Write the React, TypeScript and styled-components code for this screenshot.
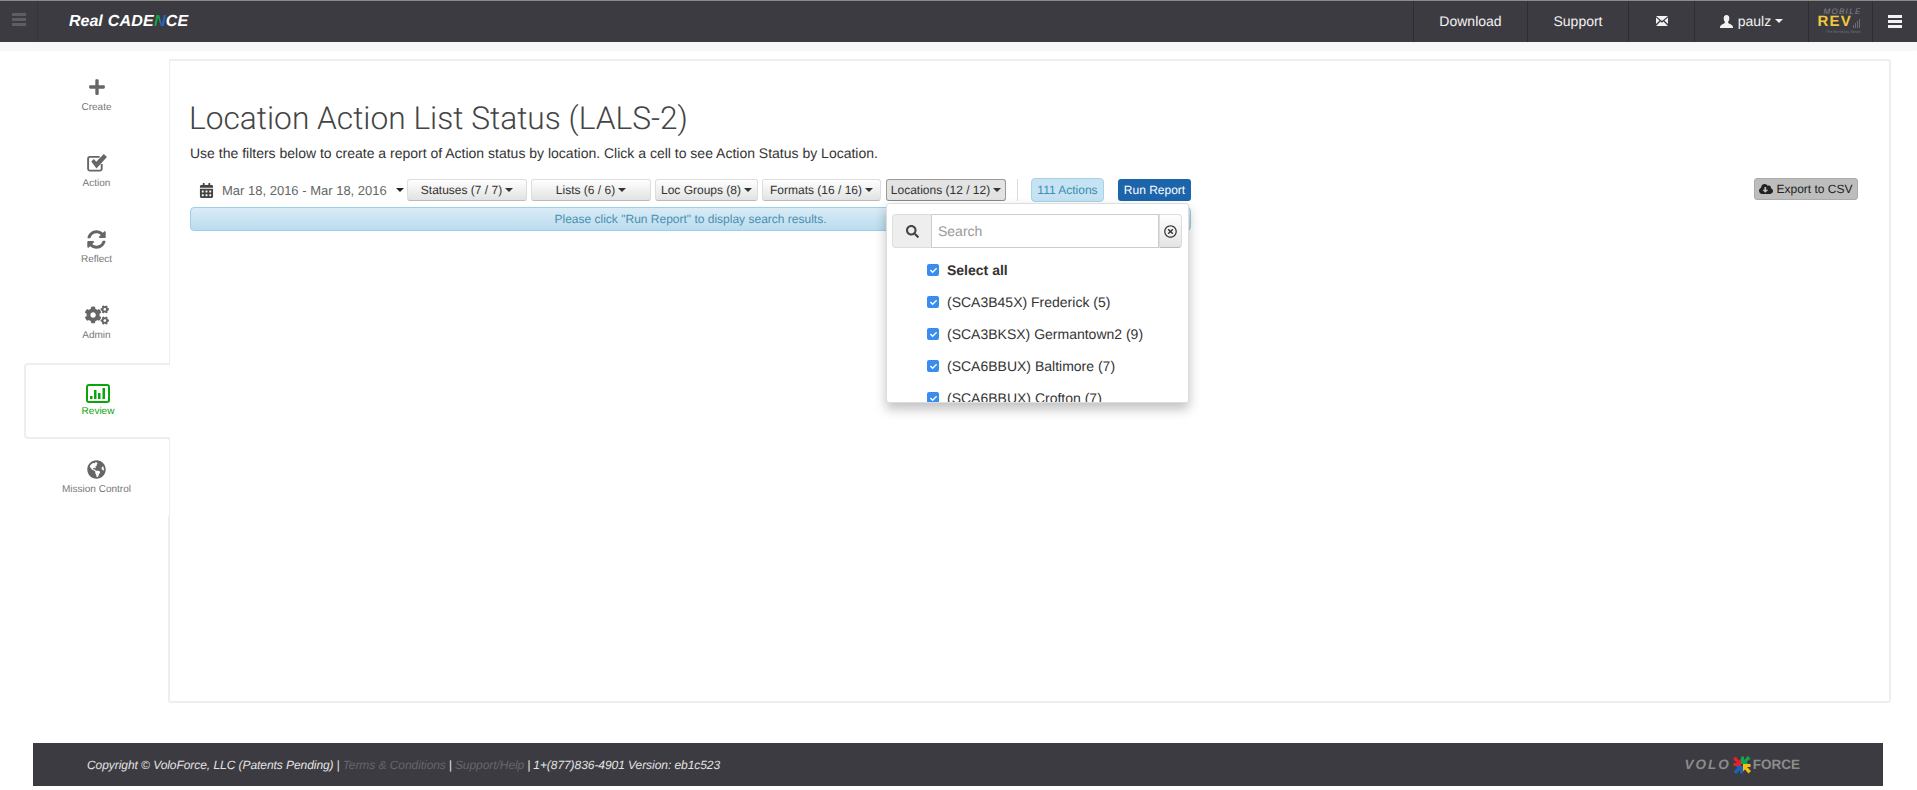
import React from "react";
import styled, { createGlobalStyle } from "styled-components";
import {
  FaCalendarAlt, FaCheck, FaCloudDownloadAlt, FaCogs, FaGlobeAmericas, FaPlus, FaSearch, FaSyncAlt, FaRegTimesCircle,
} from "react-icons/fa";

const Global = createGlobalStyle`
  html, body { margin: 0; padding: 0; background: #fff; }
  body { font-family: "Liberation Sans", Arial, sans-serif; color: #333; overflow: hidden; text-rendering: geometricPrecision; }
  * { box-sizing: border-box; }
`;

const Page = styled.div`width: 1917px; height: 790px; overflow: hidden; display: flex; flex-direction: column;`;
const NavBar = styled.header`
  height: 42px; flex: none; display: flex; align-items: stretch; background: #3c3b41;
  border-top: 1px solid #8a8a8a; color: #f2f2f2; font-size: 14px;
`;
const MenuToggle = styled.div`
  width: 38px; display: flex; align-items: center; justify-content: center;
  border-right: 1px solid #35343a; padding-bottom: 5px;
`;
const Burger = styled.span<{ $color: string }>`
  display: block; width: 14px; height: 13px;
  border-top: 3px solid ${p => p.$color}; border-bottom: 3px solid ${p => p.$color}; position: relative;
  &::after { content: ""; position: absolute; left: 0; right: 0; top: 2px; height: 3px; background: ${p => p.$color}; }
`;
const Brand = styled.div`
  margin-left: 31px; align-self: center; font-size: 16px; font-weight: 700; font-style: italic; color: #fff;
  white-space: nowrap; padding-bottom: 0;
`;
const BrandCaps = styled.span`margin-left: 5px; letter-spacing: .2px;`;
const SplitN = styled.span`
  background: linear-gradient(90deg, #17a34a 0 50%, #2467c0 50% 100%);
  -webkit-background-clip: text; background-clip: text; color: transparent;
`;
const Spacer = styled.div`flex: 1;`;
const NavItem = styled.div<{ $w: number }>`
  width: ${p => p.$w}px; display: flex; align-items: center; justify-content: center; gap: 5px;
  border-left: 1px solid #2e2d33; padding-bottom: 1px;
`;
const Caret = styled.span<{ $c?: string; $ml?: number }>`
  display: inline-block; width: 0; height: 0; margin-left: ${p => p.$ml ?? 3}px;
  border-top: 4px solid ${p => p.$c || "currentColor"}; border-left: 4px solid transparent; border-right: 4px solid transparent;
`;
const RevLogo = styled.div`display: flex; flex-direction: column; align-items: flex-start; line-height: 1; padding-bottom: 2px; width: 46px;`;
const RevTop = styled.span`font-size: 8px; color: #85848a; letter-spacing: 1.300px; font-style: italic; line-height: 9px; margin-left: 6px;`;
const RevMain = styled.span`font-size: 15px; font-weight: 700; color: #f2c83c; letter-spacing: 1.200px; display: flex; align-items: flex-end; gap: 0; line-height: 12px;`;
const RevNote = styled.span`font-size: 4px; color: #706f74; line-height: 5px; margin: 1px 0 0 8px; white-space: nowrap;`;
const SubStrip = styled.div`height: 8px; flex: none; background: #f7f7f7; box-shadow: 0 1px 2px rgba(0,0,0,.04);`;

const Body = styled.div`display: flex; margin: 9px 26px 0 24px; height: 644px; flex: none;`;
const Side = styled.nav`width: 145px; flex: none; position: relative; z-index: 1; margin-right: -1px;`;
const SideItem = styled.div<{ $active?: boolean; $pad?: number }>`
  height: 76px; display: flex; flex-direction: column; align-items: center; padding-top: ${p => p.$pad ?? 16}px;
  padding-right: ${p => (p.$active ? 0 : 2)}px;
  margin-bottom: ${p => (p.$active ? 1 : 0)}px;
  font-size: 10px; color: ${p => (p.$active ? "#0aa50a" : "#777")}; background: #fff;
  border: 2px solid ${p => (p.$active ? "#eee" : "transparent")}; border-right: 0; border-radius: 4px 0 0 4px;
  width: ${p => (p.$active ? "146px" : "145px")};
  svg { color: ${p => (p.$active ? "#0aa50a" : "#666")}; display: block; }
`;
const IconBox = styled.div`height: 20px; display: flex; align-items: center; justify-content: center;`;
const SideLabel = styled.span<{ $near?: boolean }>`margin-top: ${p => (p.$near ? 3 : 5)}px; line-height: 12px;`;

const Main = styled.main`
  flex: 1; border: 2px solid #eee; border-radius: 3px; padding: 39px 19px 0 20px; position: relative;
`;
const Title = styled.h1`
  margin: 0 0 0 -1px; font-family: Roboto, "Liberation Sans", sans-serif; font-weight: 300; font-size: 31.700px; line-height: 38px; color: #444;
`;
const Lead = styled.p`margin: 5px 0 0; font-size: 14px; line-height: 20px; color: #333;`;
const Toolbar = styled.div`display: flex; align-items: center; height: 24px; margin-top: 15px; font-size: 12px; position: relative;`;
const DateRange = styled.div`
  width: 217px; display: flex; align-items: center; padding-left: 9px; color: #666; font-size: 13px; white-space: nowrap;
  svg { color: #444; margin-right: 8px; }
`;
const Button = styled.div<{ $w: number; $gap?: number; $open?: boolean }>`
  width: ${p => p.$w}px; height: 22px; margin-right: ${p => p.$gap ?? 4}px; display: flex; align-items: center; justify-content: center;
  color: #333; border-radius: 3px; white-space: nowrap;
  background: ${p => (p.$open ? "#e3e3e3" : "linear-gradient(#fff, #e2e2e2)")};
  border: 1px solid ${p => (p.$open ? "#9a9a9a" : "#ddd")}; border-bottom-color: ${p => (p.$open ? "#888" : "#bbb")};
`;
const Divider = styled.span`width: 1px; height: 22px; background: #ddd; margin: 0 13px 0 11px;`;
const ActionsTag = styled.div`
  width: 73px; height: 24px; display: flex; align-items: center; justify-content: center; color: #3f8db0;
  background: #c5e3f3; border: 1px solid #a5d3ea; border-radius: 4px; margin-right: 14px;
`;
const RunBtn = styled.div`
  width: 73px; height: 22px; display: flex; align-items: center; justify-content: center; color: #fff;
  background: #1c65ab; border-radius: 3px;
`;
const ExportBtn = styled.div`
  margin-left: auto; margin-right: 12px; margin-top: -2px; width: 104px; height: 22px; display: flex; align-items: center; justify-content: center; gap: 3px;
  color: #222; background: #bdbdbd; border: 1px solid #aaa; border-radius: 3px; font-size: 12px;
`;
const Alert = styled.div`
  width: 1001px; height: 24px; margin-top: 5px; display: flex; align-items: center; justify-content: center;
  font-size: 12px; color: #4a8fb0; background: linear-gradient(#d9ecf6, #b9dcee); border: 1px solid #9ccfe8; border-radius: 4px;
`;
const Dropdown = styled.div`
  position: absolute; left: 716px; top: 142px; width: 303px; height: 200px; overflow: hidden; background: #fff;
  border: 1px solid #ddd; border-radius: 3px; box-shadow: 0 6px 12px rgba(0,0,0,.25); z-index: 5;
`;
const SearchGroup = styled.div`display: flex; height: 34px; margin: 10px 6px 6px 5px;`;
const SearchAddon = styled.div`
  width: 40px; display: flex; align-items: center; justify-content: center; background: #eee; color: #444;
  border: 1px solid #ddd; border-right: 1px solid #ccc; border-radius: 4px 0 0 4px;
`;
const SearchInput = styled.div`
  flex: 1; display: flex; align-items: center; padding-left: 6px; font-size: 14px; color: #999;
  border: 1px solid #ccc; border-left: 0; border-radius: 0;
`;
const ClearBtn = styled.div`
  width: 23px; display: flex; align-items: center; justify-content: center; color: #333; background: linear-gradient(#fff, #e4e4e4);
  border: 1px solid #ddd; border-bottom-color: #bbb; border-radius: 0 4px 4px 0;
`;
const CheckRow = styled.div<{ $bold?: boolean }>`
  height: 32px; display: flex; align-items: center; padding-left: 40px; font-size: 14px; color: #333; white-space: nowrap;
  font-weight: ${p => (p.$bold ? 700 : 400)};
`;
const Check = styled.span`
  width: 12px; height: 12px; border-radius: 2px; background: #3a8df0; margin-right: 8px; display: flex; align-items: center; justify-content: center; color: #fff;
`;

const Footer = styled.footer`
  flex: none; margin: 40px 34px 0 33px; height: 43px; background: #3c3b41; display: flex; align-items: center;
  padding: 0 83px 0 54px; font-size: 12px; font-style: italic; color: #e4e4e4; white-space: nowrap; letter-spacing: -.06px;
`;
const Muted = styled.span`color: #67666b;`;
const Bar = styled.span`margin: 0 3px;`;
const FootLogo = styled.div`
  margin-left: auto; display: flex; align-items: center; font-style: normal; font-weight: 700; font-size: 13.500px; color: #8c8c8c; letter-spacing: 0;
`;
const FootVolo = styled.span`font-style: italic; letter-spacing: 2px;`;

const petal = "M10 10 L10 2.500 L13 2.500 L13 6 L17 2 L19.500 4.500 L15.500 8 L17.500 10 Z";
const Pinwheel = () => (
  <svg width="22" height="22" viewBox="0 0 22 22" aria-hidden="true">
    <path d={petal} fill="#12a64a" />
    <path d={petal} fill="#f6bd16" transform="rotate(90 11 11)" />
    <path d={petal} fill="#1c62b8" transform="rotate(180 11 11)" />
    <path d={petal} fill="#e0212e" transform="rotate(270 11 11)" />
  </svg>
);
const Envelope = () => (
  <svg width="12" height="10" viewBox="0 0 12 10" aria-hidden="true">
    <path d="M0 0H12L6 5Z M0 1.500L3.600 4.600 0 8Z M12 1.500L8.400 4.600 12 8Z M0 10L4.500 5.500 6 6.800 7.500 5.500 12 10Z" fill="#f2f2f2" />
  </svg>
);
const UserIcon = () => (
  <svg width="13" height="13" viewBox="0 0 13 13" aria-hidden="true">
    <path d="M6.500 0C8.400 0 9.400 1.400 9.300 3.400 9.200 5 8.500 6.400 8 7c0 .9 .4 1.200 1.400 1.700C11 9.400 12.600 10 13 12v1H0v-1c.4-2 2-2.600 3.600-3.300C4.600 8.200 5 7.900 5 7 4.500 6.400 3.800 5 3.700 3.400 3.600 1.400 4.600 0 6.500 0Z" fill="#f2f2f2" />
  </svg>
);
const RevBars = () => (
  <svg width="10" height="11" viewBox="0 0 10 11" aria-hidden="true">
    <path d="M1 11V8h1v3z M3 11V6h1v5z M5 11V4h1v7z M7 11V2h1v9z" fill="#6f6e73" />
  </svg>
);
const ReviewIcon = () => (
  <svg width="24" height="19" viewBox="0 0 24 19" aria-hidden="true">
    <rect x="1" y="1" width="22" height="17" rx="2" fill="none" stroke="currentColor" strokeWidth="2" />
    <path d="M4 12h2.500v3H4z M8 6h2.500v9H8z M12 9h2.500v6H12z M16.500 4H19v11h-2.500z" fill="currentColor" />
  </svg>
);
const ActionIcon = () => (
  <svg width="22" height="20" viewBox="0 0 21 19" aria-hidden="true">
    <path d="M15 10.500V15a1.800 1.800 0 0 1-1.800 1.800H3.800A1.800 1.800 0 0 1 2 15V5.500a1.800 1.800 0 0 1 1.800-1.800H13" fill="none" stroke="currentColor" strokeWidth="1.800" />
    <path d="M5 8l2.500-2.300 2.300 2.500L17 1l3 2.700-10 11z" fill="currentColor" />
  </svg>
);

const items = ["(SCA3B45X) Frederick (5)", "(SCA3BKSX) Germantown2 (9)", "(SCA6BBUX) Baltimore (7)", "(SCA6BBUX) Crofton (7)"];
const Tick = () => <Check><FaCheck size={7} /></Check>;

export default function App() {
  return (
    <Page>
      <Global />
      <NavBar>
        <MenuToggle><Burger $color="#5e5d62" /></MenuToggle>
        <Brand>Real<BrandCaps>CADE<SplitN>N</SplitN>CE</BrandCaps></Brand>
        <Spacer />
        <NavItem $w={114}>Download</NavItem>
        <NavItem $w={101}>Support</NavItem>
        <NavItem $w={66}><Envelope /></NavItem>
        <NavItem $w={114}><UserIcon />paulz<Caret $ml={-1} /></NavItem>
        <NavItem $w={64}>
          <RevLogo>
            <RevTop>MOBILE</RevTop>
            <RevMain>REV<RevBars /></RevMain>
            <RevNote>The Breaking News</RevNote>
          </RevLogo>
        </NavItem>
        <NavItem $w={45}><Burger $color="#f2f2f2" /></NavItem>
      </NavBar>
      <SubStrip />
      <Body>
        <Side>
          <SideItem><IconBox><FaPlus size={18} /></IconBox><SideLabel>Create</SideLabel></SideItem>
          <SideItem><IconBox><ActionIcon /></IconBox><SideLabel>Action</SideLabel></SideItem>
          <SideItem><IconBox><FaSyncAlt size={19} /></IconBox><SideLabel>Reflect</SideLabel></SideItem>
          <SideItem><IconBox><FaCogs size={24} /></IconBox><SideLabel>Admin</SideLabel></SideItem>
          <SideItem $active $pad={18}><IconBox><ReviewIcon /></IconBox><SideLabel $near>Review</SideLabel></SideItem>
          <SideItem $pad={17}><IconBox><FaGlobeAmericas size={19} /></IconBox><SideLabel>Mission Control</SideLabel></SideItem>
        </Side>
        <Main>
          <Title>Location Action List Status (LALS-2)</Title>
          <Lead>Use the filters below to create a report of Action status by location. Click a cell to see Action Status by Location.</Lead>
          <Toolbar>
            <DateRange><FaCalendarAlt size={15} />Mar 18, 2016 - Mar 18, 2016<Caret $c="#222" $ml={9} /></DateRange>
            <Button $w={120}>Statuses (7 / 7)<Caret /></Button>
            <Button $w={120}>Lists (6 / 6)<Caret /></Button>
            <Button $w={103}>Loc Groups (8)<Caret /></Button>
            <Button $w={119} $gap={5}>Formats (16 / 16)<Caret /></Button>
            <Button $w={120} $gap={0} $open>Locations (12 / 12)<Caret /></Button>
            <Divider />
            <ActionsTag>111 Actions</ActionsTag>
            <RunBtn>Run Report</RunBtn>
            <ExportBtn><FaCloudDownloadAlt size={14} />Export to CSV</ExportBtn>
          </Toolbar>
          <Alert>Please click "Run Report" to display search results.</Alert>
          <Dropdown>
            <SearchGroup>
              <SearchAddon><FaSearch size={13} /></SearchAddon>
              <SearchInput>Search</SearchInput>
              <ClearBtn><FaRegTimesCircle size={13} /></ClearBtn>
            </SearchGroup>
            <CheckRow $bold><Tick />Select all</CheckRow>
            {items.map(t => <CheckRow key={t}><Tick />{t}</CheckRow>)}
          </Dropdown>
        </Main>
      </Body>
      <Footer>
        Copyright © VoloForce, LLC (Patents Pending)<Bar>|</Bar><Muted>Terms &amp; Conditions</Muted><Bar>|</Bar><Muted>Support/Help</Muted><Bar>|</Bar>1+(877)836-4901 Version: eb1c523
        <FootLogo><FootVolo>VOLO</FootVolo><Pinwheel />FORCE</FootLogo>
      </Footer>
    </Page>
  );
}
